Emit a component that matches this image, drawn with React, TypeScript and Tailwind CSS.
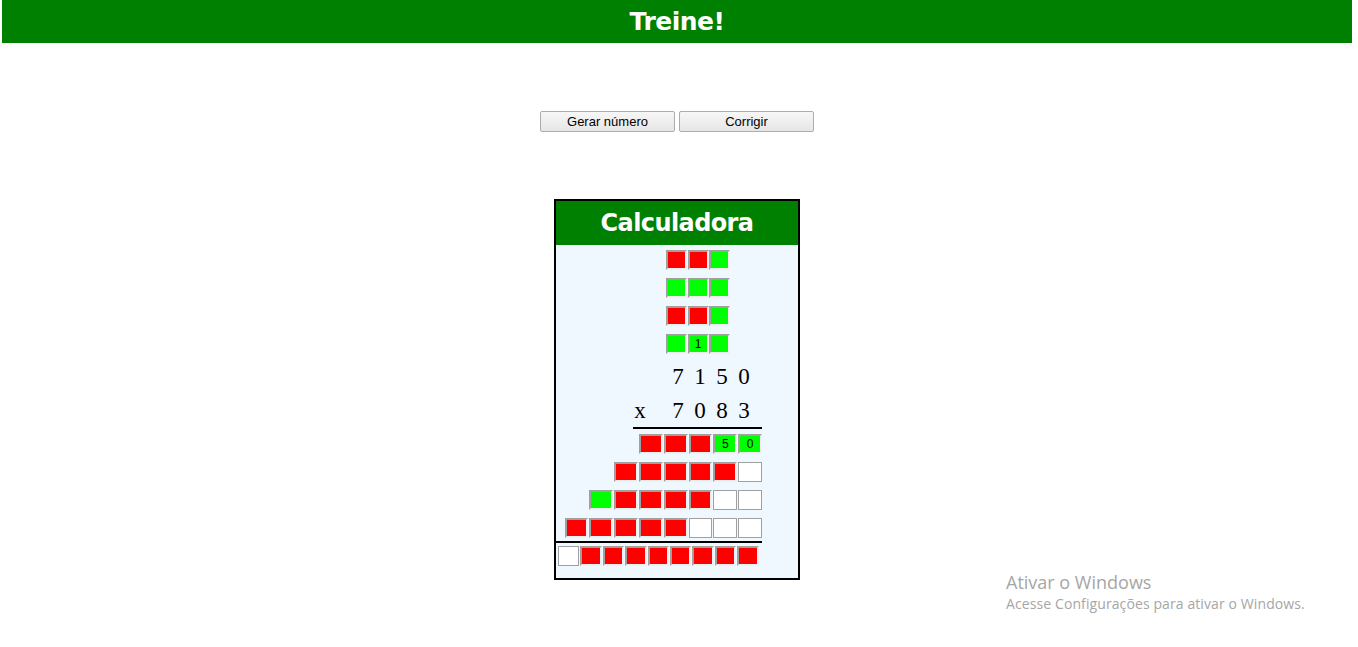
type Cell = { c: 'r' | 'g' | 'w'; v?: string }

const r: Cell = { c: 'r' }
const g: Cell = { c: 'g' }
const w: Cell = { c: 'w' }

const topRows: Cell[][] = [
  [r, r, g],
  [g, g, g],
  [r, r, g],
  [g, { c: 'g', v: '1' }, g],
]

const partialRows: Cell[][] = [
  [r, r, r, { c: 'g', v: '5' }, { c: 'g', v: '0' }],
  [r, r, r, r, r, w],
  [g, r, r, r, r, w, w],
  [r, r, r, r, r, w, w, w],
]

const resultRow: Cell[] = [w, r, r, r, r, r, r, r, r]

function Box({ cell, size }: { cell: Cell; size: string }) {
  const color =
    cell.c === 'r'
      ? 'bg-[#ff0000] border-2 border-t-[#a0a0a0] border-l-[#a0a0a0] border-b-[#f0f0f0] border-r-[#f0f0f0]'
      : cell.c === 'g'
        ? 'bg-[#00ff00] border-2 border-t-[#a0a0a0] border-l-[#a0a0a0] border-b-[#f0f0f0] border-r-[#f0f0f0]'
        : 'bg-white border border-[#a0a0a0]'
  return (
    <div
      className={`${size} h-[20px] ${color} flex items-center justify-center font-['Liberation_Sans',Arial,sans-serif] text-[12px] leading-none text-black`}
    >
      {cell.v}
    </div>
  )
}

function Digits({ x, nums, h }: { x?: boolean; nums: string[]; h: string }) {
  return (
    <div className={`flex ${h} items-center text-[23px] leading-[32px] text-black`}>
      <div className="w-[73px]" />
      <div className="w-[22px] text-center">{x ? 'x' : ''}</div>
      <div className="w-[16px]" />
      {nums.map((n, i) => (
        <div key={i} className="w-[22px] text-center">
          {n}
        </div>
      ))}
    </div>
  )
}

export default function App() {
  return (
    <div className="relative min-h-[647px] w-[1354px] bg-white font-['Liberation_Sans',Arial,sans-serif]">
      {/* Header */}
      <header className="mx-[2px] flex h-[43px] items-center justify-center bg-[#008000]">
        <h1 className="font-['DejaVu_Sans',sans-serif] text-[25px] font-bold tracking-[-0.5px] text-white">
          Treine!
        </h1>
      </header>

      <main className="mx-[2px] flex flex-col items-center">
        {/* Buttons */}
        <div className="mt-[68px] flex gap-[4px]">
          <button className="h-[21px] w-[135px] rounded-[2px] border border-[#adadad] bg-gradient-to-b from-[#f7f7f7] to-[#e6e6e6] text-[13px] leading-none text-black">
            Gerar número
          </button>
          <button className="h-[21px] w-[135px] rounded-[2px] border border-[#adadad] bg-gradient-to-b from-[#f7f7f7] to-[#e6e6e6] text-[13px] leading-none text-black">
            Corrigir
          </button>
        </div>

        {/* Calculadora */}
        <div className="mt-[67px] w-[246px] border-2 border-black bg-[#f0f8ff]">
          <div className="flex h-[44px] items-center justify-center bg-[#008000]">
            <h2 className="font-['DejaVu_Sans',sans-serif] text-[24px] font-bold tracking-[-0.6px] text-white">
              Calculadora
            </h2>
          </div>

          <div className="flex flex-col pt-[5px] pb-[12px] font-['Liberation_Serif',serif]">
            {topRows.map((row, i) => (
              <div key={i} className={`flex gap-[0.5px] pl-[110px] ${i > 0 ? 'mt-[8px]' : ''}`}>
                {row.map((c, j) => (
                  <Box key={j} cell={c} size="w-[21px]" />
                ))}
              </div>
            ))}

            <div className="mt-[7px]">
              <Digits h="h-[32px]" nums={['7', '1', '5', '0']} />
              <Digits h="h-[36px]" x nums={['7', '0', '8', '3']} />
            </div>

            <div className="mt-[-2px] ml-[77px] h-[2px] w-[129px] bg-black" />

            {partialRows.map((row, i) => (
              <div key={i} className={`flex w-[206px] justify-end gap-[1px] ${i > 0 ? 'mt-[8px]' : 'mt-[5px]'}`}>
                {row.map((c, j) => (
                  <Box key={j} cell={c} size="w-[23.8px]" />
                ))}
              </div>
            ))}

            <div className="mt-[3px] h-[2px] w-[206px] bg-black" />

            <div className="mt-[3px] flex gap-[1px] pl-[2px]">
              {resultRow.map((c, j) => (
                <Box key={j} cell={c} size="w-[21.4px]" />
              ))}
            </div>
          </div>
        </div>
      </main>

      {/* Windows activation watermark */}
      <div className="pointer-events-none absolute left-[1006px] top-[571px] font-['Open_Sans',sans-serif] text-[#a6a6a6]">
        <div className="text-[18px] leading-[22px]">Ativar o Windows</div>
        <div className="text-[14px] leading-[22px] tracking-[0.1px]">Acesse Configurações para ativar o Windows.</div>
      </div>
    </div>
  )
}
